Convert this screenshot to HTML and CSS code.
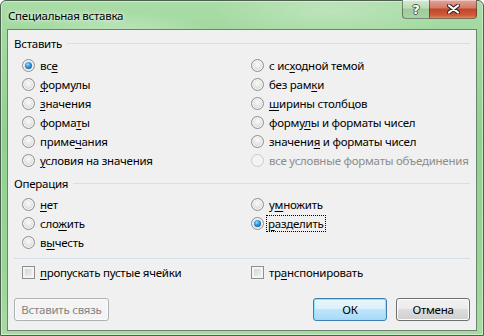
FILE: index.html
```html
<!DOCTYPE html>
<html lang="ru">
    <head>
        <title>Специальная вставка</title>
        <meta charset="utf-8">
        <link rel="stylesheet" href="styles.css">
    </head>
    <body>
        <div class="window">
            <div class="titlebar">
                <span class="title">Специальная вставка</span>
                <div class="caption-buttons">
                    <span class="cap help">?</span>
                    <span class="cap close">
                        <svg width="13" height="10" viewBox="0 0 13 10">
                            <path d="M2 1.5 L11 8.5 M11 1.5 L2 8.5" stroke="#3a2a26" stroke-width="4.2" stroke-linecap="round"/>
                            <path d="M2 1.5 L11 8.5 M11 1.5 L2 8.5" stroke="#fff" stroke-width="2.2" stroke-linecap="round"/>
                        </svg>
                    </span>
                </div>
            </div>

            <div class="client">
                <div class="group-head"><span>Вставить</span><i class="rule"></i></div>
                <div class="options paste">
                    <div class="opt"><span class="radio checked"></span><span>вс<u>е</u></span></div>
                    <div class="opt"><span class="radio"></span><span>с ис<u>х</u>одной темой</span></div>
                    <div class="opt"><span class="radio"></span><span><u>ф</u>ормулы</span></div>
                    <div class="opt"><span class="radio"></span><span>без рам<u>к</u>и</span></div>
                    <div class="opt"><span class="radio"></span><span><u>з</u>начения</span></div>
                    <div class="opt"><span class="radio"></span><span><u>ш</u>ирины столбцов</span></div>
                    <div class="opt"><span class="radio"></span><span>форма<u>т</u>ы</span></div>
                    <div class="opt"><span class="radio"></span><span>форму<u>л</u>ы и форматы чисел</span></div>
                    <div class="opt"><span class="radio"></span><span>приме<u>ч</u>ания</span></div>
                    <div class="opt"><span class="radio"></span><span>значени<u>я</u> и форматы чисел</span></div>
                    <div class="opt"><span class="radio"></span><span><u>у</u>словия на значения</span></div>
                    <div class="opt disabled"><span class="radio"></span><span>все условные форматы объединения</span></div>
                </div>

                <div class="group-head second"><span>Операция</span><i class="rule"></i></div>
                <div class="options operation">
                    <div class="opt"><span class="radio"></span><span><u>н</u>ет</span></div>
                    <div class="opt"><span class="radio"></span><span>у<u>м</u>ножить</span></div>
                    <div class="opt"><span class="radio"></span><span>сло<u>ж</u>ить</span></div>
                    <div class="opt"><span class="radio checked"></span><span class="focus"><u>р</u>азделить</span></div>
                    <div class="opt"><span class="radio"></span><span>в<u>ы</u>честь</span></div>
                </div>

                <div class="separator"></div>
                <div class="options checks">
                    <div class="opt"><span class="checkbox"></span><span><u>п</u>ропускать пустые ячейки</span></div>
                    <div class="opt"><span class="checkbox"></span><span>тр<u>а</u>нспонировать</span></div>
                </div>

                <div class="buttons">
                    <button type="button" class="btn link" disabled>Вставить связь</button>
                    <button type="button" class="btn default">ОК</button>
                    <button type="button" class="btn">Отмена</button>
                </div>
            </div>
        </div>
    </body>
</html>
```

FILE: styles.css
```css
:root {
    --ui-font: "Noto Sans", "DejaVu Sans", sans-serif;
    --ui-size: 11.5px;
}
html, body {
    margin: 0;
    background: #fff;
}
body {
    font-family: var(--ui-font);
    font-size: var(--ui-size);
    letter-spacing: -0.25px;
    color: #000;
}
.window {
    box-sizing: border-box;
    width: 484px;
    height: 336px;
    display: flex;
    flex-direction: column;
    padding: 0 6px 4px 6px;
    border: 1px solid #4d5f4d;
    border-radius: 6px 6px 0 0;
    background:
        radial-gradient(ellipse 90px 26px at 120px 36px, rgba(255,255,255,.35), transparent),
        radial-gradient(ellipse 120px 30px at 330px 10px, rgba(255,255,255,.25), transparent),
        linear-gradient(#a9dca6, #8fd28f 40%, #98d696 80%, #a7dba3);
    box-shadow: inset 0 0 0 1px rgba(255,255,255,.45);
}
.titlebar {
    height: 28px;
    display: flex;
    align-items: flex-start;
}
.title {
    margin: 7px 0 0 1px;
    text-shadow: 0 0 6px rgba(255,255,255,.9), 0 0 3px rgba(255,255,255,.8);
}
.caption-buttons {
    margin-left: auto;
    margin-top: -1px;
    display: flex;
}
.cap {
    height: 19px;
    display: flex;
    align-items: center;
    justify-content: center;
    border: 1px solid rgba(40,60,40,.55);
    border-top: 0;
    box-sizing: border-box;
}
.help {
    width: 27px;
    border-right: 0;
    border-radius: 0 0 0 4px;
    background: linear-gradient(#d4e9d2, #bcdcb9 45%, #9fcb9b 50%, #a9d1a5);
    color: #fff;
    font-family: "DejaVu Sans", sans-serif;
    font-weight: bold;
    font-size: 13px;
    text-shadow: 1px 0 #4b5a4b, -1px 0 #4b5a4b, 0 1px #4b5a4b, 0 -1px #4b5a4b;
    box-shadow: inset 0 1px 0 rgba(255,255,255,.6);
}
.close {
    width: 48px;
    border-radius: 0 0 4px 0;
    background: linear-gradient(#e2a597, #d37a67 45%, #c5432a 50%, #cd5c3a 85%, #e08a5a);
    box-shadow: inset 0 1px 0 rgba(255,255,255,.4);
}
.client {
    flex: 1;
    background: #f0f0f0;
    border: 1px solid #6e836e;
    padding: 6px 6px 0 6px;
}
.group-head {
    height: 15px;
    display: flex;
    align-items: center;
    gap: 5px;
}
.group-head.second {
    margin-top: 6px;
}
.rule {
    flex: 1;
    height: 1px;
    background: #d5dfe5;
}
.options {
    display: grid;
    grid-template-columns: 229px 1fr;
    grid-auto-rows: 19px;
    padding-left: 8px;
}
.paste {
    margin-top: 5px;
}
.operation {
    margin-top: 4px;
}
.opt {
    display: flex;
    align-items: center;
    gap: 5px;
    white-space: nowrap;
}
.opt u {
    text-decoration-thickness: 1px;
    text-underline-offset: 2px;
}
.opt.disabled {
    color: #8d8d8d;
}
.radio {
    box-sizing: border-box;
    width: 13px;
    height: 13px;
    border-radius: 50%;
    border: 1px solid #8e8f8f;
    background: radial-gradient(circle at 50% 40%, #fbfbfb 0, #e6e6e6 45%, #c9c9c9 100%);
    box-shadow: inset 0 0 0 1px #f6f6f6;
    display: flex;
    align-items: center;
    justify-content: center;
    flex: none;
}
.radio.checked::after {
    content: "";
    width: 7px;
    height: 7px;
    border-radius: 50%;
    background: radial-gradient(circle at 40% 35%, #9ee0ff 0, #3a9ee0 35%, #1a5d97 80%, #143e68 100%);
}
.disabled .radio {
    border-color: #cacaca;
    background: #f3f3f3;
    box-shadow: none;
}
.focus {
    outline: 1px dotted #000;
    outline-offset: 0;
    padding: 0 1px;
    margin-left: -2px;
    line-height: 15px;
}
.separator {
    height: 1px;
    background: #d5dfe5;
    margin: 6px 0 0 0;
}
.checks {
    margin-top: 4px;
}
.checkbox {
    box-sizing: border-box;
    width: 13px;
    height: 13px;
    border: 1px solid #8e8f8f;
    background: linear-gradient(135deg, #cbcfd5, #f6f6f6);
    box-shadow: inset 0 0 0 2px #f4f4f4;
    flex: none;
}
.buttons {
    margin-top: 16px;
    display: flex;
    gap: 9px;
}
.btn {
    height: 23px;
    width: 74px;
    padding: 0;
    font-family: var(--ui-font);
    font-size: var(--ui-size);
    letter-spacing: -0.25px;
    color: #000;
    border: 1px solid #707070;
    border-radius: 3px;
    background: linear-gradient(#f2f2f2, #ebebeb 50%, #dddddd 50%, #cfcfcf);
    box-shadow: inset 0 0 0 1px #fcfcfc;
}
.btn.link {
    width: 95px;
    margin-right: auto;
    color: #838383;
    border-color: #adb2b5;
    background: #f4f4f4;
}
.btn.default {
    border-color: #3c7fb1;
    background: linear-gradient(#eaf6fd, #d9f0fc 50%, #bee6fd 50%, #a7d9f5);
    box-shadow: inset 0 0 0 1px #8fe3fc;
}
```
